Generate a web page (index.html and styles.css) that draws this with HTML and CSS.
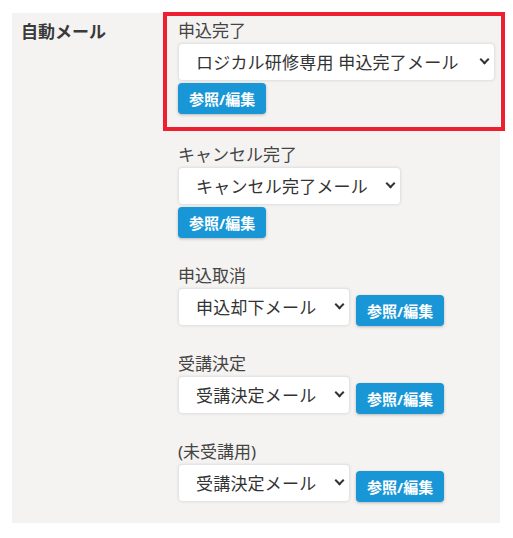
FILE: index.html
```html
<!DOCTYPE html>
<html lang="ja">
<head>
    <meta charset="UTF-8">
    <meta name="viewport" content="width=device-width, initial-scale=1.0">
    <title>自動メール設定</title>
    <link rel="stylesheet" href="styles.css">
</head>
<body>
    <div class="panel">
        <div class="panel-title">自動メール</div>

        <div class="mail-list">
            <div class="mail-item highlight">
                <div class="mail-label">申込完了</div>
                <span class="select-wrap">
                    <select class="mail-select">
                        <option>ロジカル研修専用 申込完了メール</option>
                    </select>
                </span>
                <div>
                    <button class="edit-btn">参照/編集</button>
                </div>
            </div>

            <div class="mail-item first-plain">
                <div class="mail-label">キャンセル完了</div>
                <span class="select-wrap">
                    <select class="mail-select">
                        <option>キャンセル完了メール</option>
                    </select>
                </span>
                <div>
                    <button class="edit-btn">参照/編集</button>
                </div>
            </div>

            <div class="mail-item">
                <div class="mail-label">申込取消</div>
                <div class="mail-row">
                    <span class="select-wrap">
                        <select class="mail-select">
                            <option>申込却下メール</option>
                        </select>
                    </span>
                    <button class="edit-btn">参照/編集</button>
                </div>
            </div>

            <div class="mail-item">
                <div class="mail-label">受講決定</div>
                <div class="mail-row">
                    <span class="select-wrap">
                        <select class="mail-select">
                            <option>受講決定メール</option>
                        </select>
                    </span>
                    <button class="edit-btn">参照/編集</button>
                </div>
            </div>

            <div class="mail-item">
                <div class="mail-label">(未受講用)</div>
                <div class="mail-row">
                    <span class="select-wrap">
                        <select class="mail-select">
                            <option>受講決定メール</option>
                        </select>
                    </span>
                    <button class="edit-btn">参照/編集</button>
                </div>
            </div>
        </div>
    </div>
</body>
</html>
```

FILE: styles.css
```css
body{
    margin: 0;
    background-color: white;
    font-family: "Noto Sans", "Noto Sans CJK JP", sans-serif;
    color: #444;
}
.panel{
    display: flex;
    margin: 13px 0 0 12px;
    width: 488px;
    height: 510px;
    background-color: #f4f3f1;
}
.panel-title{
    flex-shrink: 0;
    width: 142px;
    padding: 9px 0 0 9px;
    font-size: 17px;
    line-height: 20px;
    font-weight: bold;
    color: #3a3a3a;
}
.mail-list{
    flex: 1;
    min-width: 0;
}
.mail-item{
    padding-left: 15px;
    margin-top: 28px;
}
.mail-item.first-plain{
    margin-top: 14px;
}
.highlight{
    box-sizing: border-box;
    width: 342px;
    margin-top: -1px;
    border: 4px solid #ee1f30;
    padding: 5px 6px 13px 11px;
}
.mail-label{
    font-size: 17px;
    line-height: 20px;
    margin-bottom: 2px;
    color: #444;
}
.select-wrap{
    position: relative;
    display: inline-block;
    vertical-align: top;
}
.select-wrap::after{
    content: "";
    position: absolute;
    right: 7px;
    top: 13px;
    width: 5px;
    height: 5px;
    border-right: 2.5px solid #333;
    border-bottom: 2.5px solid #333;
    transform: rotate(45deg);
    pointer-events: none;
}
.mail-select{
    appearance: none;
    -webkit-appearance: none;
    height: 38px;
    padding: 0 32px 0 17px;
    border: 1px solid #e4e4e4;
    border-radius: 4px;
    background-color: white;
    box-shadow: 0 0 3px rgba(0, 0, 0, 0.08);
    font-family: "Noto Sans", "Noto Sans CJK JP", sans-serif;
    font-size: 17px;
    letter-spacing: 0.2px;
    color: #333;
}
.highlight .mail-select{
    width: 317px;
}
.mail-row{
    display: flex;
    align-items: flex-end;
    gap: 6px;
}
.edit-btn{
    height: 31px;
    margin-top: 2px;
    padding: 0 11px;
    border: none;
    border-radius: 4px;
    background-color: #1896d6;
    box-shadow: 0 1px 3px rgba(0, 0, 0, 0.25);
    color: white;
    font-family: "Noto Sans", "Noto Sans CJK JP", sans-serif;
    font-size: 15px;
    font-weight: bold;
    cursor: pointer;
}
```
